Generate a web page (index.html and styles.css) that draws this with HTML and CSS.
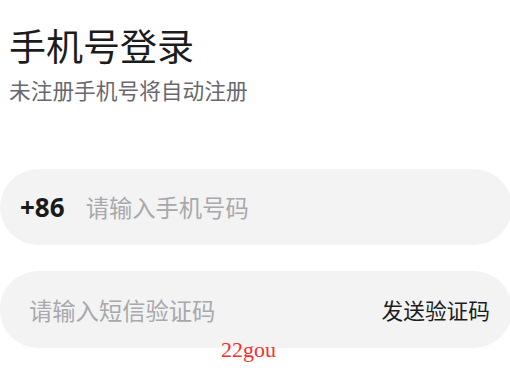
FILE: index.html
```html
<!DOCTYPE html>
<html lang="zh-CN">
<head>
<meta charset="utf-8">
<title>手机号登录</title>
<link rel="stylesheet" href="styles.css">
</head>
<body>
<main class="page">
  <header class="head">
    <h1 class="title">手机号登录</h1>
    <p class="subtitle">未注册手机号将自动注册</p>
  </header>
  <form class="form">
    <div class="field field-phone">
      <span class="prefix">+86</span>
      <span class="placeholder">请输入手机号码</span>
    </div>
    <div class="field field-code">
      <span class="placeholder">请输入短信验证码</span>
      <span class="send">发送验证码</span>
    </div>
  </form>
  <div class="watermark">22gou</div>
</main>
</body>
</html>
```
FILE: styles.css
```css
html, body {
  margin: 0;
  padding: 0;
  background: #ffffff;
  overflow: hidden;
}
body {
  width: 510px;
  height: 380px;
  font-family: "Noto Sans CJK SC", "Noto Sans", sans-serif;
}
.page {
  position: relative;
  height: 380px;
}
.head {
  padding: 20px 0 0 9px;
}
.title {
  margin: 0;
  font-size: 37px;
  line-height: 50px;
  font-weight: 400;
  color: #1c1c1c;
}
.subtitle {
  margin: 5px 0 0;
  font-size: 21.7px;
  line-height: 30px;
  color: #68686e;
}
.form {
  display: flex;
  flex-direction: column;
  gap: 26px;
  margin-top: 64px;
  width: 512px;
}
.field {
  display: flex;
  align-items: center;
  height: 76px;
  border-radius: 38px;
  background: #f3f3f3;
  box-sizing: border-box;
}
.field-phone {
  padding-left: 20px;
}
.field-code {
  height: 77px;
  padding: 0 22px 0 29px;
  justify-content: space-between;
}
.prefix {
  font-family: "Noto Sans", "Noto Sans CJK SC", sans-serif;
  font-weight: 700;
  font-size: 26px;
  color: #1a1a1a;
  margin-right: 21px;
}
.placeholder {
  font-size: 23.3px;
  color: #a8a8ad;
}
.send {
  font-size: 21.7px;
  color: #1c1c1c;
}
.watermark {
  position: absolute;
  left: 221px;
  top: 338px;
  font-family: "Liberation Serif", serif;
  font-size: 22px;
  line-height: 24px;
  color: #ff2a2a;
}
```
